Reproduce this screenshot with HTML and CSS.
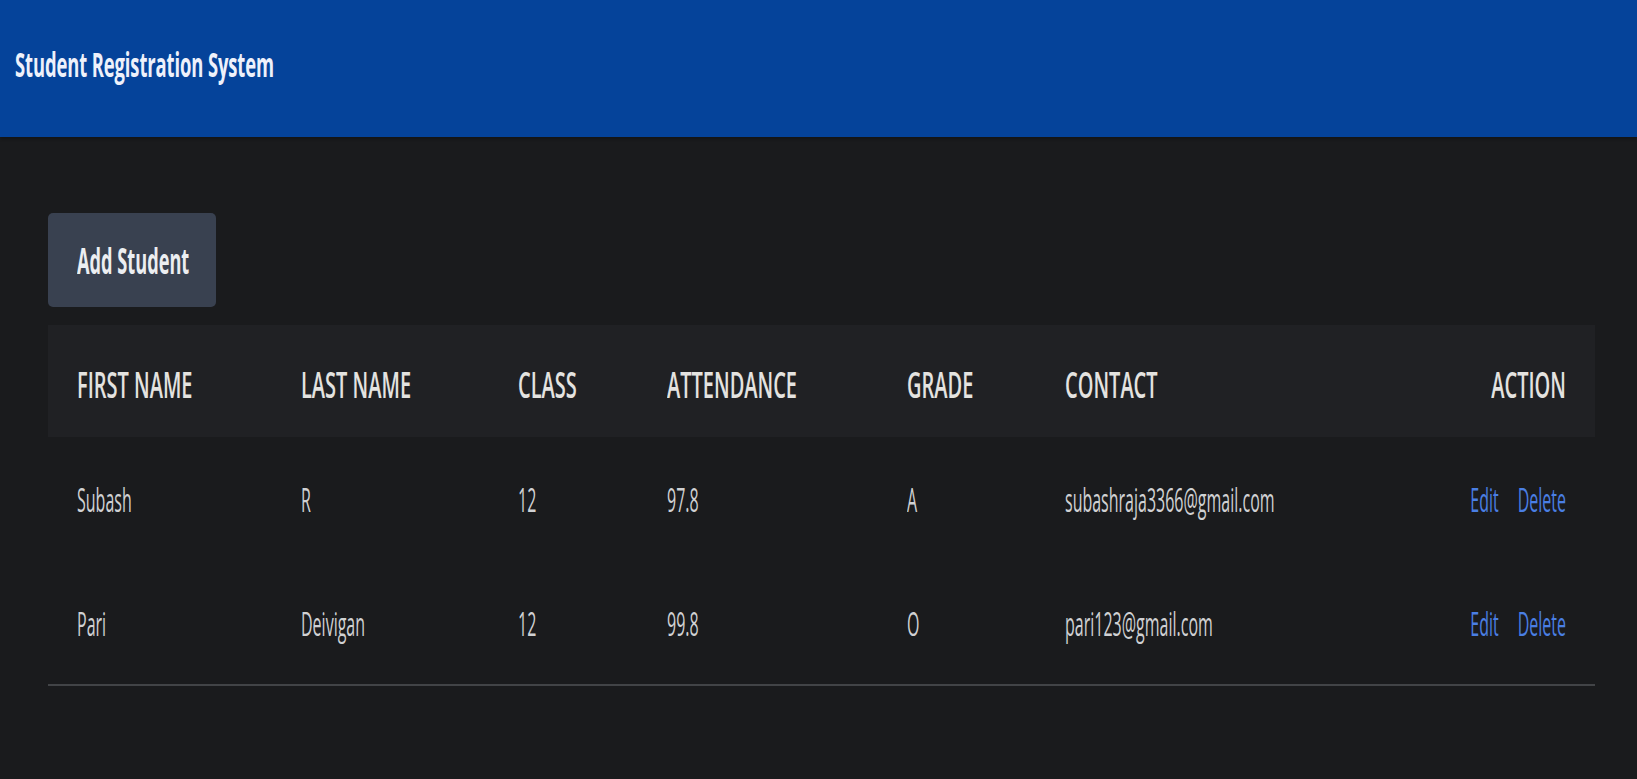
FILE: index.html
```html
<!DOCTYPE html>
<html lang="en">
<head>
<meta charset="utf-8">
<title>Student Registration System</title>
<link rel="stylesheet" href="styles.css">
</head>
<body>
<header class="topbar">
  <h1 class="brand"><span class="sq sq-title">Student Registration System</span></h1>
</header>
<main class="content">
  <button class="add-btn" type="button"><span class="sq sq-btn">Add Student</span></button>
  <table class="students">
    <colgroup>
      <col class="c1"><col class="c2"><col class="c3"><col class="c4"><col class="c5"><col class="c6"><col class="c7">
    </colgroup>
    <thead>
      <tr>
        <th><span class="sq sq-th">First Name</span></th>
        <th><span class="sq sq-th">Last Name</span></th>
        <th><span class="sq sq-th">Class</span></th>
        <th><span class="sq sq-th">Attendance</span></th>
        <th><span class="sq sq-th">Grade</span></th>
        <th><span class="sq sq-th">Contact</span></th>
        <th class="right"><span class="sq sq-th">Action</span></th>
      </tr>
    </thead>
    <tbody>
      <tr>
        <td><span class="sq sq-td">Subash</span></td>
        <td><span class="sq sq-td">R</span></td>
        <td><span class="sq sq-td">12</span></td>
        <td><span class="sq sq-td">97.8</span></td>
        <td><span class="sq sq-td">A</span></td>
        <td><span class="sq sq-td">subashraja3366@gmail.com</span></td>
        <td class="right"><div class="actions"><a class="link sq sq-td" href="#">Edit</a><a class="link sq sq-td" href="#">Delete</a></div></td>
      </tr>
      <tr class="last">
        <td><span class="sq sq-td">Pari</span></td>
        <td><span class="sq sq-td">Deivigan</span></td>
        <td><span class="sq sq-td">12</span></td>
        <td><span class="sq sq-td">99.8</span></td>
        <td><span class="sq sq-td">O</span></td>
        <td><span class="sq sq-td">pari123@gmail.com</span></td>
        <td class="right"><div class="actions"><a class="link sq sq-td" href="#">Edit</a><a class="link sq sq-td" href="#">Delete</a></div></td>
      </tr>
    </tbody>
  </table>
</main>
</body>
</html>
```
FILE: styles.css
```css
* { box-sizing: border-box; }
html, body { margin: 0; padding: 0; }
body {
  background: #1a1b1d;
  font-family: "Open Sans", "Noto Sans", Arial, sans-serif;
  color: #d2d3d5;
  height: 779px;
  overflow: hidden;
}
.sq { display: inline-block; transform-origin: center center; }

.topbar {
  height: 137px;
  background: #05439a;
  display: flex;
  align-items: center;
  padding: 0 0 9px 15px;
  box-shadow: 0 2px 3px rgba(0,0,0,0.25);
  position: relative;
}
.brand { margin: 0; font-size: 18.4px; font-weight: 700; color: #eef1fb; line-height: 1; }
.sq-title { transform: scaleY(1.85); letter-spacing: -0.1px; }

.content { padding: 76px 42px 0 48px; }

.add-btn {
  display: flex;
  align-items: center;
  width: 168px;
  height: 94px;
  padding: 0 0 0 29px;
  border: 0;
  border-radius: 5px;
  background: #394150;
  color: #eceef1;
  font-family: inherit;
  font-size: 18.2px;
  font-weight: 700;
  line-height: 1;
}
.sq-btn { transform: scaleY(1.98); }

.students {
  margin-top: 18px;
  width: 1547px;
  border-collapse: collapse;
  table-layout: fixed;
}
.c1 { width: 224px; }
.c2 { width: 217px; }
.c3 { width: 149px; }
.c4 { width: 240px; }
.c5 { width: 158px; }
.c7 { width: 200px; }

.students thead tr { background: #202124; height: 112px; }
.students th {
  text-align: left;
  padding: 8px 0 0 29px;
  font-size: 20px;
  font-weight: 600;
  text-transform: uppercase;
  color: #e4e3e0;
  line-height: 1;
}
.sq-th { transform: scaleY(1.82); }
.students th.right, .students td.right { text-align: right; padding-right: 29px; padding-left: 0; }

.students tbody tr { height: 124px; }
.students tbody tr.last { border-bottom: 2px solid #424447; }
.students td {
  padding: 2px 0 0 29px;
  font-size: 16px;
  font-weight: 400;
  color: #d0d1d3;
  line-height: 1;
}
.students td.right { padding-top: 2px; }
.sq-td { transform: scaleY(2.0); }

.actions { display: flex; justify-content: flex-end; gap: 19px; }
.link { color: #4a7fe4; text-decoration: none; }
```
